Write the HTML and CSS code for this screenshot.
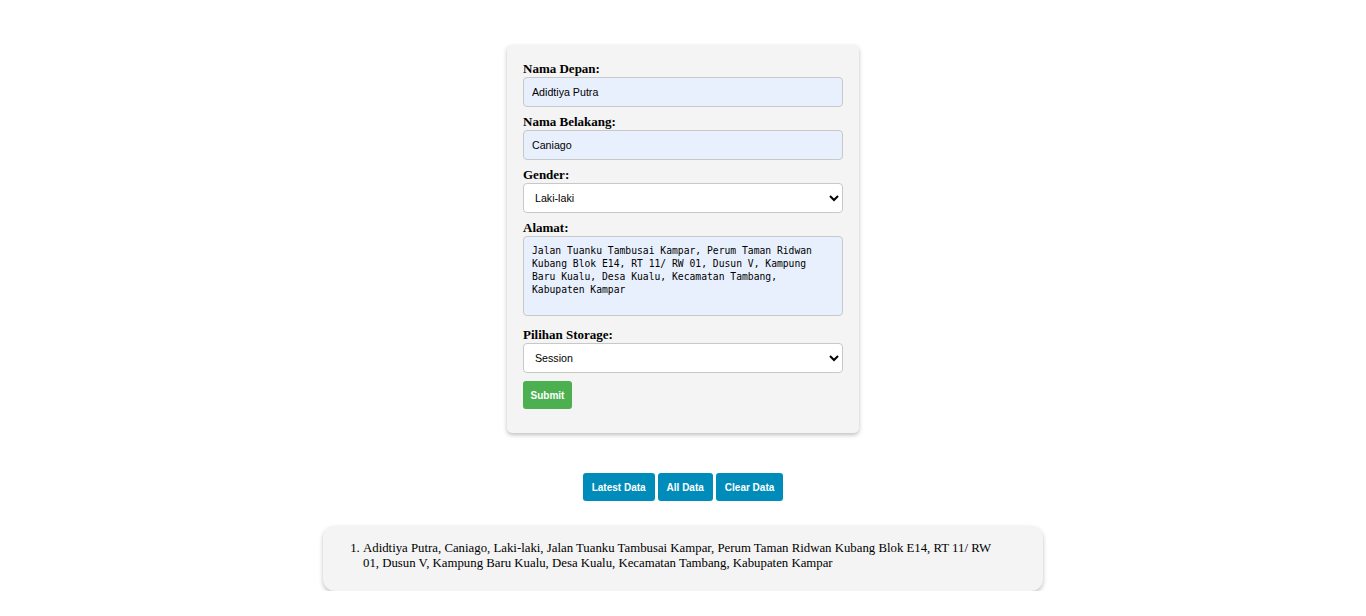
FILE: index.html
```html
<!DOCTYPE html>
<html>
<head>
<meta charset="utf-8">
<link rel="stylesheet" href="styles.css">
</head>
<body>
<div class="page">
  <form class="card">
    <label class="lbl">Nama Depan:</label>
    <input class="field filled" type="text" value="Adidtiya Putra">
    <label class="lbl">Nama Belakang:</label>
    <input class="field filled" type="text" value="Caniago">
    <label class="lbl">Gender:</label>
    <select class="field sel"><option>Laki-laki</option><option>Perempuan</option></select>
    <label class="lbl">Alamat:</label>
    <textarea class="field area filled">Jalan Tuanku Tambusai Kampar, Perum Taman Ridwan Kubang Blok E14, RT 11/ RW 01, Dusun V, Kampung Baru Kualu, Desa Kualu, Kecamatan Tambang, Kabupaten Kampar</textarea>
    <label class="lbl">Pilihan Storage:</label>
    <select class="field sel"><option>Session</option><option>Local</option></select>
    <div class="submit-row"><button type="button" class="btn-submit">Submit</button></div>
  </form>
  <div class="actions">
    <button type="button" class="btn-blue">Latest Data</button>
    <button type="button" class="btn-blue">All Data</button>
    <button type="button" class="btn-blue">Clear Data</button>
  </div>
  <div class="result">
    <ol class="list">
      <li>Adidtiya Putra, Caniago, Laki-laki, Jalan Tuanku Tambusai Kampar, Perum Taman Ridwan Kubang Blok E14, RT 11/ RW 01, Dusun V, Kampung Baru Kualu, Desa Kualu, Kecamatan Tambang, Kabupaten Kampar</li>
    </ol>
  </div>
</div>
</body>
</html>
```

FILE: styles.css
```css
html, body {
  margin: 0;
  padding: 0;
  background: #ffffff;
}
body {
  font-family: "Liberation Serif", "Times New Roman", serif;
  color: #000;
}
.page {
  display: flex;
  flex-direction: column;
  align-items: center;
  padding-top: 45px;
}
.card {
  width: 320px;
  background: #f4f4f4;
  border-radius: 5px;
  box-shadow: 0 2px 4px rgba(0, 0, 0, 0.25);
  padding: 16px 16px 24px 16px;
  display: flex;
  flex-direction: column;
}
.lbl {
  display: block;
  font-weight: bold;
  font-size: 13px;
  line-height: 16px;
  height: 16px;
}
.field {
  box-sizing: border-box;
  width: 320px;
  height: 30px;
  margin: 0 0 7px 0;
  border: 1px solid #c8c8c8;
  border-radius: 4px;
  padding: 0 8px;
  font-family: "Liberation Sans", Arial, sans-serif;
  font-size: 10.67px;
  color: #000;
  background: #ffffff;
  outline: none;
}
.filled {
  background: #e8f0fe;
}
.sel {
  padding: 0 8px 0 7px;
}
.area {
  height: 80px;
  padding: 7px 8px;
  font-family: "DejaVu Sans Mono", "Liberation Mono", monospace;
  font-size: 9.7px;
  line-height: 13px;
  resize: none;
  margin-bottom: 11px;
}
.submit-row {
  display: flex;
  padding-top: 1px;
}
.btn-submit {
  height: 28px;
  width: 49px;
  padding: 0;
  border: none;
  border-radius: 3px;
  background: #4caf50;
  color: #fff;
  font-family: "Liberation Sans", Arial, sans-serif;
  font-weight: bold;
  font-size: 10px;
}
.actions {
  display: flex;
  gap: 3px;
  margin-top: 40px;
}
.btn-blue {
  height: 28px;
  padding: 0 9px;
  border: none;
  border-radius: 3px;
  background: #008cba;
  color: #fff;
  font-family: "Liberation Sans", Arial, sans-serif;
  font-weight: bold;
  font-size: 10px;
}
.result {
  box-sizing: border-box;
  width: 720px;
  margin-top: 25px;
  background: #f4f4f4;
  border-radius: 12px;
  box-shadow: 0 2px 4px rgba(0, 0, 0, 0.25);
  padding: 15px 45px 20px 0;
}
.list {
  margin: 0;
  padding-left: 40px;
  font-size: 12.8px;
  line-height: 15px;
}
```
